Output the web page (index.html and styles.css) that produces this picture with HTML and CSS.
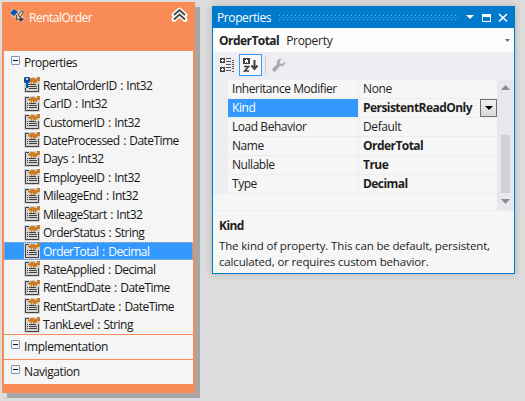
FILE: index.html
```html
<!DOCTYPE html>
<html lang="en">
<head>
<meta charset="utf-8">
<title>RentalOrder</title>
<link rel="stylesheet" href="styles.css">
</head>
<body>
<svg class="defs" width="0" height="0">
  <defs>
    <pattern id="grip" width="4" height="4" patternUnits="userSpaceOnUse"><path d="M0 0h1v1H0zM2 2h1v1H2z" fill="#6db5e6"/></pattern>
    <symbol id="prop" viewBox="0 0 16 16">
      <path d="M0 0h16v16H0z" fill="#d3d3d4"/>
      <path d="M5 1.500H1.500v13h13V7" fill="none" stroke="#424245"/>
      <path d="M3 7.500h1M5 7.500h7M3 9.500h1M5 9.500h8M3 11.500h1M5 11.500h8" stroke="#424245"/>
      <path d="M4 3l2-1 1-1h3l1 1h2V0h3v4h-2l-2 2h-2v1h-1V5H8v2H7V5H5V4H4z" fill="#cf7d22"/>
    </symbol>
    <symbol id="keyprop" viewBox="0 0 16 16">
      <use href="#prop"/>
      <path d="M0 0h6v7H5v5H0z" fill="#d3d3d4"/>
      <path d="M1 0h4l1 1v4L5 6H4v1h1v1H4v1h1v1H4v1H2V6H1L0 5V1zM2 1v2h2V1z" fill="#0b4fa0" fill-rule="evenodd"/>
      <path d="M1.500 11v3.500h2" fill="none" stroke="#424245"/>
    </symbol>
    <symbol id="minus" viewBox="0 0 9 9"><rect x=".5" y=".5" width="8" height="8" rx=".5" fill="#f3f6fa" stroke="#8095ad"/><path d="M2 4.500h5" stroke="#111"/></symbol>
  </defs>
</svg>
<main class="stage">
  <section class="entity">
    <header class="entity-head">
      <svg class="entity-icon" width="17" height="16" viewBox="0 0 17 16">
        <path d="M0 5l5-5 3 3 2-1 4 0 1 3-2 2 3 3-3 5-5-3 0-3-3 1z" fill="#dcc8be" opacity=".8"/>
        <path d="M1 5l4-4 4 3-4 4z" fill="#0c57a8"/>
        <path d="M9 7l3-4h2v2l-3 4zM7.500 7v4.500H11" fill="none" stroke="#555"/>
        <path d="M11 9l4 2-3 3-2-2z" fill="#424245"/>
      </svg>
      <h1>RentalOrder</h1>
      <svg class="collapse" width="17" height="16" viewBox="0 0 17 16">
        <path d="M3 8l5.500-5L14 8M3 12.500l5.500-5 5.500 5" fill="none" stroke="#fff" stroke-width="4.800" stroke-linejoin="round" stroke-linecap="round"/>
        <path d="M3 8l5.500-5L14 8M3 12.500l5.500-5 5.500 5" fill="none" stroke="#444749" stroke-width="1.800"/>
      </svg>
    </header>
    <div class="group props"><svg width="9" height="9"><use href="#minus"/></svg><span>Properties</span></div>
    <ul class="fields">
      <li><svg width="16" height="16"><use href="#keyprop"/></svg>RentalOrderID : Int32</li>
      <li><svg width="16" height="16"><use href="#prop"/></svg>CarID : Int32</li>
      <li><svg width="16" height="16"><use href="#prop"/></svg>CustomerID : Int32</li>
      <li><svg width="16" height="16"><use href="#prop"/></svg>DateProcessed : DateTime</li>
      <li><svg width="16" height="16"><use href="#prop"/></svg>Days : Int32</li>
      <li><svg width="16" height="16"><use href="#prop"/></svg>EmployeeID : Int32</li>
      <li><svg width="16" height="16"><use href="#prop"/></svg>MileageEnd : Int32</li>
      <li><svg width="16" height="16"><use href="#prop"/></svg>MileageStart : Int32</li>
      <li><svg width="16" height="16"><use href="#prop"/></svg>OrderStatus : String</li>
      <li class="selected"><svg width="16" height="16"><use href="#prop"/></svg>OrderTotal : Decimal</li>
      <li><svg width="16" height="16"><use href="#prop"/></svg>RateApplied : Decimal</li>
      <li><svg width="16" height="16"><use href="#prop"/></svg>RentEndDate : DateTime</li>
      <li><svg width="16" height="16"><use href="#prop"/></svg>RentStartDate : DateTime</li>
      <li><svg width="16" height="16"><use href="#prop"/></svg>TankLevel : String</li>
    </ul>
    <div class="group section"><svg width="9" height="9"><use href="#minus"/></svg><span>Implementation</span></div>
    <div class="group section"><svg width="9" height="9"><use href="#minus"/></svg><span>Navigation</span></div>
  </section>

  <section class="panel">
    <header class="titlebar">
      <h2>Properties</h2>
      <svg class="grip" width="89" height="5"><rect width="100%" height="5" fill="url(#grip)"/></svg>
      <svg width="42" height="10" viewBox="0 0 42 10">
        <path d="M0 2h8L4 6z" fill="#fff"/>
        <path d="M16 1h9v8h-9zM17 4v4h7V4z" fill="#fff" fill-rule="evenodd"/>
        <path d="M33 1l8 7.500M41 1l-8 7.500" stroke="#fff" stroke-width="1.700"/>
      </svg>
    </header>
    <div class="object"><b>OrderTotal</b><span>Property</span><svg width="5" height="3"><path d="M0 0h5L2.500 3z" fill="#717171"/></svg></div>
    <div class="toolbar">
      <svg width="15" height="15" viewBox="0 0 15 15">
        <path d="M0 0h5v5H0zM0 9h5v5H0z" fill="#424242"/>
        <path d="M1 2.500h3M2.500 1v3M1 11.500h3M2.500 10v3" stroke="#fff"/>
        <path d="M6 .5h5M6 3.500h5M6 6.500h5M6 9.500h5M6 12.500h5M12 2.500h2M12 4.500h2M12 6.500h2M12 8.500h2M12 10.500h2M12 13.500h2" stroke="#555"/>
      </svg>
      <span class="sort"><svg width="15" height="14" viewBox="0 0 15 14">
        <path d="M0 0h7v6H0zM2 5V2h1V1h1v1h1v3H4V4H3v1z" fill="#424242" fill-rule="evenodd"/>
        <path d="M1 8.500h4.500L1.500 13H6" fill="none" stroke="#424242" stroke-width="1.700"/>
        <path d="M11.500 2v9M8.500 7.500l3 3.500 3-3.500" fill="none" stroke="#424242" stroke-width="2"/>
      </svg></span>
      <i class="sep"></i>
      <svg class="wrench" width="14" height="14" viewBox="0 0 14 14"><path d="M1 13c-1-1-1-2 0-3l4-4c-1-3 1-6 5-5L8 3v2l2 1 3-3c1 4-2 6-5 5l-4 5c-1 1-2 1-3 0z" fill="#a9a9ac" stroke="#dcdcde" stroke-width=".7"/></svg>
    </div>
    <div class="grid">
      <div class="rows">
        <div class="row"><span>Inheritance Modifier</span><span>None</span></div>
        <div class="row active"><span>Kind</span><b>PersistentReadOnly</b><i class="drop"><svg width="8" height="4"><path d="M0 0h8L4 4z"/></svg></i></div>
        <div class="row"><span>Load Behavior</span><span>Default</span></div>
        <div class="row"><span>Name</span><b>OrderTotal</b></div>
        <div class="row"><span>Nullable</span><b>True</b></div>
        <div class="row"><span>Type</span><b>Decimal</b></div>
      </div>
      <div class="scroll">
        <svg width="9" height="5"><path d="M0 5h9L4.500 0z" fill="#868999"/></svg>
        <i class="thumb"></i>
        <svg width="9" height="5"><path d="M0 0h9L4.500 5z" fill="#868999"/></svg>
      </div>
    </div>
    <div class="help"><b>Kind</b><p>The kind of property. This can be default, persistent,<br>calculated, or requires custom behavior.</p></div>
  </section>
</main>
</body>
</html>
```
FILE: styles.css
```css
* { box-sizing: border-box; }
body {
  margin: 0;
  width: 525px;
  height: 401px;
  overflow: hidden;
  background: #dcdcdc;
  color: #1e1e1e;
  font: 12px/15px "Open Sans", "Noto Sans", sans-serif;
  letter-spacing: -0.5px;
}
b { letter-spacing: -0.55px; }
svg { display: block; flex: none; }
.defs { position: absolute; }
h1, h2, p, ul { margin: 0; padding: 0; font: inherit; }
.stage { display: flex; align-items: flex-start; gap: 17px; padding: 2px 0 0 2px; }

.entity {
  width: 193px;
  height: 391px;
  flex: none;
  background: #f5f5f5;
  border: solid #f98c56;
  border-width: 1px 2px 9px;
  box-shadow: 5px 5px 0 #a6a6a6;
  color: #161616;
}
.entity-head {
  display: flex;
  align-items: flex-start;
  height: 48px;
  padding: 4px 4px 0 5px;
  background: #f98c56;
  color: #fff;
}
.entity-icon { margin-top: 1px; }
.entity-head h1 { margin: 3px 0 0 3px; flex: 1; }
.collapse { margin-right: 1px; }
.group { display: flex; align-items: flex-start; padding-left: 7px; }
.group span { margin: -1px 0 0 4px; }
.props { height: 25px; padding-top: 5px; }
.fields { list-style: none; height: 258px; word-spacing: 1px; letter-spacing: -0.55px; }
.fields li {
  display: flex;
  align-items: center;
  height: 18.43px;
  padding-left: 20px;
  gap: 3px;
  white-space: nowrap;
}
.fields .selected { background: #3399ff; color: #fff; outline: 1px dotted #b5b5ad; outline-offset: -1px; }
.section { height: 25px; padding-top: 5px; border-top: 1px solid #f98c56; letter-spacing: -0.4px; }

.panel {
  width: 303px;
  height: 268px;
  margin-top: 4px;
  flex: none;
  border: 1px solid #007acc;
  background: #f6f6f6;
  box-shadow: 0 0 7px rgba(0, 0, 0, .2);
}
.titlebar {
  display: flex;
  align-items: center;
  height: 21px;
  padding: 0 6px 0 4px;
  background: #007acc;
  color: #fff;
}
.titlebar h2 { letter-spacing: -0.4px; }
.titlebar .grip { flex: 1; margin: 0 7px 0 8px; }
.object { display: flex; align-items: center; height: 24px; padding: 0 4px 0 6px; background: #fcfcfc; }
.object span { margin-left: 7px; flex: 1; letter-spacing: -0.3px; }
.toolbar { display: flex; align-items: center; height: 28px; padding: 0 0 2px 7px; background: #eeeef2; }
.sort { display: flex; width: 23px; height: 22px; margin-left: 4px; align-items: center; justify-content: center; border: 1px solid #3399ff; background: #f8f8fa; }
.sep { width: 1px; height: 20px; margin: 0 6px 0 3px; background: #cccedb; }
.grid { display: flex; height: 131px; border-bottom: 1px solid #ededf0; letter-spacing: -0.4px; }
.rows { flex: 1; height: 114px; border-left: 15px solid #eeeef2; }
.row { display: grid; grid-template-columns: 131px 1fr auto; height: 19px; border-bottom: 1px solid #ededf0; line-height: 18px; }
.row > :first-child { padding-left: 4px; border-right: 1px solid #ededf0; }
.row > :first-child:not(b) { letter-spacing: -0.45px; }
.row > :nth-child(2) { padding-left: 4px; white-space: nowrap; }
.row.active > :first-child { background: #3399ff; color: #fff; }
.drop { display: flex; align-items: center; justify-content: center; width: 17px; height: 18px; border: 1px solid #707070; background: linear-gradient(#f2f2f2, #d8d8d8); }
.scroll { display: flex; flex-direction: column; align-items: center; width: 17px; padding: 5px 0 6px; background: #e8e8ec; }
.thumb { width: 9px; height: 58px; margin: auto 0 6px; background: #d0d1d5; }
.help { padding: 7px 6px 0; white-space: nowrap; }
.help b { display: block; }
.help p { margin-top: 5px; font-size: 11.5px; line-height: 16px; letter-spacing: -0.15px; }
```
